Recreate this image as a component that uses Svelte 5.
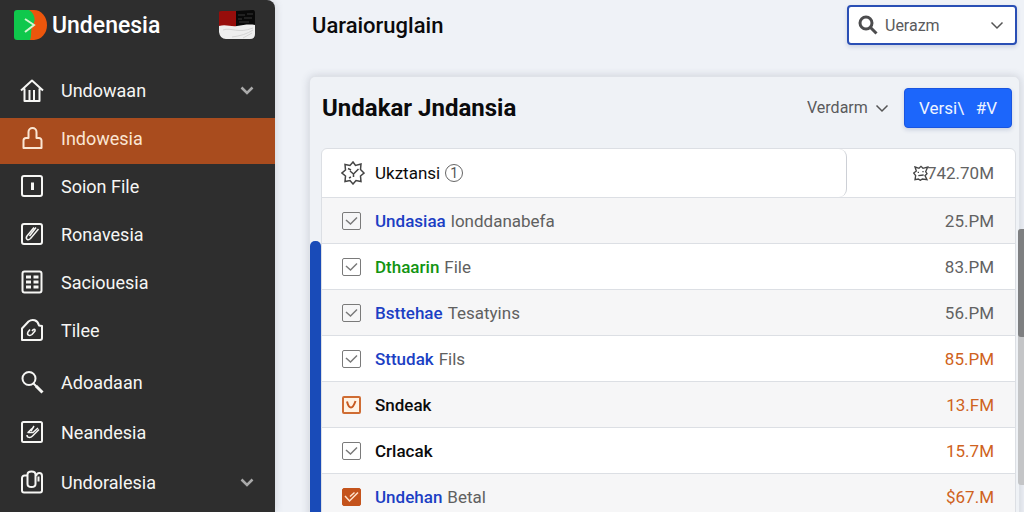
<script>
    const mainMenu = [
        { label: "Undowaan", icon: "home", expandable: true },
        { label: "Indowesia", icon: "stamp", active: true },
        { label: "Soion File", icon: "info" },
        { label: "Ronavesia", icon: "clip" },
        { label: "Saciouesia", icon: "table" },
        { label: "Tilee", icon: "tag" },
    ];

    const extraMenu = [
        { label: "Adoadaan", icon: "search" },
        { label: "Neandesia", icon: "edit" },
        { label: "Undoralesia", icon: "cards", expandable: true },
    ];

    let rows = $state([
        { name: "Undasiaa", tone: "blue", note: "londdanabefa", amount: "25.PM", box: "plain", checked: true },
        { name: "Dthaarin", tone: "green", note: "File", amount: "83.PM", box: "plain", checked: true },
        { name: "Bsttehae", tone: "blue", note: "Tesatyins", amount: "56.PM", box: "plain", checked: true },
        { name: "Sttudak", tone: "blue", note: "Fils", amount: "85.PM", warm: true, box: "plain", checked: true },
        { name: "Sndeak", tone: "dark", note: "", amount: "13.FM", warm: true, box: "outlined", checked: true },
        { name: "Crlacak", tone: "dark", note: "", amount: "15.7M", warm: true, box: "plain", checked: true },
        { name: "Undehan", tone: "blue", note: "Betal", amount: "$67.M", warm: true, box: "filled", checked: true },
    ]);

    let region = $state("Uerazm");
    let period = $state("Verdarm");
</script>

{#snippet chevron()}
    <svg class="chevron" viewBox="0 0 16 16" aria-hidden="true">
        <path d="M2.5 5.5 8 11l5.5-5.5" />
    </svg>
{/snippet}

{#snippet menuIcon(name)}
    <svg class="menu-icon" viewBox="0 0 24 24" aria-hidden="true">
        {#if name === "home"}
            <path d="M1 12.5 12 2.5l11 10M4.5 10.5V23h15V10.5M9.5 23V12M14 23V12" />
        {:else if name === "stamp"}
            <path d="M8.5 12V6a4 4 0 0 1 8 0v6h2.5a2.5 2.5 0 0 1 2.500 2.500V22h-18v-7.500A2.500 2.500 0 0 1 6 12z" />
        {:else if name === "info"}
            <rect x="2" y="2" width="20" height="20" rx="2" />
            <path class="thick" d="M12.500 8.500v7.500" />
        {:else if name === "clip"}
            <rect x="2" y="2" width="20" height="20" rx="2" />
            <path class="thin" d="M14 5.500 7 14c-2 3 1 5 3.500 2.500L18.500 7M16 5.500l-6.500 8.500" />
        {:else if name === "table"}
            <rect x="2.500" y="1.500" width="19" height="21" rx="2" />
            <path class="thick" d="M6 7h5M13.500 7h5M6 12h5M13.500 12h5M6 17h5M13.500 17h5" />
        {:else if name === "tag"}
            <path d="M2 22V10.500L8.500 3.500c4-3 9-1.500 10.500 4l3 .5v12a2 2 0 0 1-2 2z" />
            <path class="thin" d="m10 11.500-2 2.500c-1.500 3 1.500 4.500 4 2.500l3-3.500c.5-2.500-1.500-2-3 0" />
        {:else if name === "search"}
            <circle cx="9" cy="8.500" r="6.500" />
            <path d="m13.500 13.500 3 3" />
            <path class="thick" d="m16 16 6.500 6.500" />
        {:else if name === "edit"}
            <rect x="2" y="2" width="20" height="20" rx="1.500" />
            <path class="thin" d="m12 8.500-4 4h5l5-4.500M7 15c0 3 3.500 3 5.500 1l6.500-6.500M14 6l-3 5" />
        {:else if name === "cards"}
            <path d="M8 5.500H4.500A2.500 2.500 0 0 0 2 8v12.500a2 2 0 0 0 2 2h16a2 2 0 0 0 2-2V6c0-4-5-4-6 0" />
            <path d="M7.500 4.500c0-4 8-4 8 0V14c0 4-8 4-8 0zM18.500 6.500v5" />
        {/if}
    </svg>
{/snippet}

{#snippet menuItem(item)}
    <li>
        <a href="#{item.icon}" class="menu-item" class:active={item.active}>
            {@render menuIcon(item.icon)}
            <span class="menu-label">{item.label}</span>
            {#if item.expandable}
                {@render chevron()}
            {/if}
        </a>
    </li>
{/snippet}

<div class="page">
    <aside class="sidebar">
        <div class="brand">
            <svg class="logo" viewBox="0 0 34 30" aria-hidden="true">
                <path d="M14 0h6a13 15 0 0 1 0 30h-6z" fill="#ec560c" />
                <path d="M3 0h12c6 4 7 10 4 15s-1 11-3 15H3a3 3 0 0 1-3-3V3a3 3 0 0 1 3-3z" fill="#0fc84c" />
                <path d="m11 9 9 6-9 7" fill="none" stroke="#d5f5cf" stroke-width="2" />
            </svg>
            <span class="brand-name">Undenesia</span>
            <svg class="flag" viewBox="0 0 38 30" aria-hidden="true">
                <path d="M1 2Q1 1 4 1h14v16H1z" fill="#970d0b" />
                <path d="M18 1l17-1q2 0 2 3v12l-19 2z" fill="#090909" />
                <path d="M20 5h7M29 4h6M20 9h4M26 8h8M21 12h10" stroke="#393939" stroke-width="1" />
                <path d="M1 16c7-2 12 1 18 0s12-2 18-1v9q0 5-5 5H8q-6 0-7-7z" fill="#eee" />
                <path d="M5 20c8-3 15 4 30-2M14 27c8-1 15-3 21-7M25 28l9-5" fill="none" stroke="#d4d4d4" stroke-width="1" />
            </svg>
        </div>
        <nav>
            <ul class="menu">
                {#each mainMenu as item}
                    {@render menuItem(item)}
                {/each}
            </ul>
            <ul class="menu menu-extra">
                {#each extraMenu as item}
                    {@render menuItem(item)}
                {/each}
            </ul>
        </nav>
    </aside>

    <main class="content">
        <header class="topbar">
            <h1>Uaraioruglain</h1>
            <div class="picker picker-search">
                <svg class="search-icon" viewBox="0 0 20 20" aria-hidden="true">
                    <circle cx="8" cy="8" r="6" />
                    <path d="m12.500 12.500 6 6" />
                </svg>
                <select bind:value={region} aria-label="Uerazm">
                    <option>Uerazm</option>
                </select>
                {@render chevron()}
            </div>
        </header>

        <section class="card">
            <div class="card-head">
                <h2>Undakar Jndansia</h2>
                <div class="picker picker-plain">
                    <select bind:value={period} aria-label="Verdarm">
                        <option>Verdarm</option>
                    </select>
                    {@render chevron()}
                </div>
                <button type="button" class="btn-primary"><span>Versi\</span><span>#V</span></button>
            </div>

            <div class="card-body">
                <div class="rail"></div>
                <table>
                    <thead>
                        <tr>
                            <th class="head-name" scope="col">
                                <div class="head-box">
                                    <svg class="gear" viewBox="0 0 24 24" aria-hidden="true">
                                        <path d="m12 1 2.500 3.500L20 3l-.5 5.500L23 12l-3.500 3 .5 5.500-5-1L12 23l-3-3.500-5 1 .5-5.500L1 12l3.500-3L4 3.500l5 1z" />
                                        <path d="m7 7.500 3 1.500M9 10l3.500 3 5-5M12.500 13v3M8 17l2-1" />
                                    </svg>
                                    <span>Ukztansi</span>
                                    <span class="count">1</span>
                                </div>
                            </th>
                            <th class="amount" scope="col">
                                <div class="total">
                                    <svg class="gear gear-small" viewBox="0 0 24 24" aria-hidden="true">
                                        <path d="m3 3 6 2 3-3 3 3 7-2-3 7 2 3-3 3 3 6-7-1-3 2-3-2-5 1 1-6-3-4 4-3z" />
                                        <path d="M8 10v2M15 9v2M8 16l8-1" />
                                    </svg>
                                    <span>742.70M</span>
                                </div>
                            </th>
                        </tr>
                    </thead>
                    <tbody>
                        {#each rows as row, i}
                            <tr>
                                <td>
                                    <label class="row-label" for="row-{i}">
                                        <span class="check {row.box}">
                                            <input type="checkbox" id="row-{i}" bind:checked={row.checked} />
                                            {#if row.checked}
                                                <svg viewBox="0 0 18 18" aria-hidden="true">
                                                    {#if row.box === "outlined"}
                                                        <path d="M5 5.500c1 4 2 6 4 6s3-2 4.500-6.500" />
                                                    {:else if row.box === "filled"}
                                                        <path d="m3 8 4.500 5L16 4.500M8 8.500l4.500-4" />
                                                    {:else}
                                                        <path d="m4 8 4.500 4 6.500-6.500" />
                                                    {/if}
                                                </svg>
                                            {/if}
                                        </span>
                                        <span class="name {row.tone}">{row.name}</span>
                                        {#if row.note}
                                            <span class="note">{row.note}</span>
                                        {/if}
                                    </label>
                                </td>
                                <td class="amount" class:warm={row.warm}>{row.amount}</td>
                            </tr>
                        {/each}
                    </tbody>
                </table>
            </div>
        </section>
    </main>

    <div class="scroll-track"><div class="scroll-thumb"></div></div>
</div>

<style>
    :global(body) {
        background: #eff2f7;
        font-family: Roboto, "Liberation Sans", sans-serif;
        color: #0b0b0c;
    }

    .page {
        position: relative;
        display: flex;
        height: 100vh;
        overflow: hidden;
    }

    svg {
        display: block;
        flex: none;
    }

    .sidebar {
        flex: none;
        width: 275px;
        background: #2e2e2e;
        border-top-right-radius: 8px;
        box-shadow: 0 0 8px rgba(60, 70, 90, 0.2);
    }

    .brand {
        display: flex;
        align-items: center;
        height: 50px;
        padding: 0 19px 0 14px;
        color: #fff;
    }

    .logo {
        width: 34px;
        height: 30px;
        margin-right: 4px;
    }

    .brand-name {
        flex: 1;
        font-size: 23px;
        font-weight: 500;
    }

    .flag {
        width: 38px;
        height: 30px;
    }

    .menu {
        display: flex;
        flex-direction: column;
        gap: 2px;
        margin: 0;
        padding: 20px 0 0;
        list-style: none;
    }

    .menu-extra {
        gap: 4px;
        padding-top: 6px;
    }

    .menu-item {
        display: flex;
        align-items: center;
        box-sizing: border-box;
        height: 46px;
        padding: 0 20px 6px;
        color: #f6f6f4;
        font-size: 18px;
        text-decoration: none;
    }

    .menu-item.active {
        background: #a94c1e;
        color: #fbe6d3;
    }

    .menu-icon {
        width: 24px;
        height: 24px;
        margin-right: 17px;
        fill: none;
        stroke: currentColor;
        stroke-width: 2;
        stroke-linejoin: round;
    }

    .menu-icon .thick {
        stroke-width: 3;
    }

    .menu-icon .thin {
        stroke-width: 1.5;
    }

    .menu-label {
        flex: 1;
    }

    .chevron {
        width: 16px;
        height: 16px;
        fill: none;
        stroke: #555;
        stroke-width: 1.5;
    }

    .menu-item .chevron {
        stroke: #aaa;
        stroke-width: 2.5;
    }

    .content {
        flex: 1;
        display: flex;
        flex-direction: column;
        min-width: 0;
        padding: 0 4px 0 34px;
    }

    .topbar {
        flex: none;
        display: flex;
        align-items: center;
        justify-content: space-between;
        height: 50px;
        margin-bottom: 26px;
        padding: 0 3px;
    }

    h1 {
        margin: 0;
        font-size: 22px;
        font-weight: 500;
    }

    .picker {
        display: grid;
        align-items: center;
    }

    .picker select {
        grid-area: 1 / 1;
        appearance: none;
        margin: 0;
        border: 0;
        background: transparent;
        color: #5a5a5c;
        font: inherit;
        font-size: 16px;
    }

    .picker .chevron,
    .search-icon {
        grid-area: 1 / 1;
        justify-self: end;
        pointer-events: none;
    }

    .picker-search {
        box-sizing: border-box;
        width: 170px;
        height: 40px;
        border: 2px solid #2a4fb5;
        border-radius: 4px;
        background: #fff;
        box-shadow: 0 2px 4px rgba(60, 80, 140, 0.2);
    }

    .picker-search select {
        height: 36px;
        padding: 0 36px;
    }

    .picker-search .chevron {
        margin-right: 10px;
    }

    .picker .search-icon {
        width: 20px;
        height: 20px;
        justify-self: start;
        margin-left: 9px;
        fill: none;
        stroke: #4c4c4e;
        stroke-width: 3;
    }

    .picker-plain select {
        height: 36px;
        padding: 0 22px 0 0;
    }

    .card {
        flex: 1;
        display: flex;
        flex-direction: column;
        border: 1px solid #dfe2e8;
        border-bottom: 0;
        border-radius: 6px 6px 0 0;
        background: #eff2f6;
        box-shadow: 0 0 8px rgba(60, 70, 90, 0.2);
    }

    .card-head {
        flex: none;
        display: flex;
        align-items: center;
        height: 61px;
        padding: 0 7px 0 12px;
    }

    h2 {
        flex: 1;
        margin: 0;
        font-size: 24px;
        font-weight: 700;
    }

    .btn-primary {
        display: flex;
        align-items: center;
        justify-content: space-between;
        width: 108px;
        height: 40px;
        margin-left: 14px;
        padding: 0 14px;
        border: 1px solid #1a55e0;
        border-radius: 4px;
        background: #1c66fb;
        box-shadow: 0 2px 4px rgba(60, 80, 140, 0.2);
        color: #eef4ff;
        font: inherit;
        font-size: 17px;
    }

    .card-body {
        flex: 1;
        display: flex;
        align-items: stretch;
        padding: 10px 3px 0 0;
    }

    .rail {
        flex: none;
        width: 11px;
        margin-top: 93px;
        border-top-left-radius: 5px;
        border-top-right-radius: 5px;
        background: #194bb8;
    }

    table {
        flex: 1;
        align-self: flex-start;
        border-collapse: separate;
        border-spacing: 0;
        border: 1px solid #dcdfe4;
        border-radius: 6px 6px 0 0;
        background: #fff;
        font-size: 17px;
    }

    th,
    td {
        box-sizing: border-box;
        padding: 0;
        text-align: left;
        font-weight: 400;
    }

    td {
        height: 46px;
        border-top: 1px solid #dcdfe4;
    }

    tbody tr:nth-child(odd) {
        background: #f6f6f7;
    }

    .head-box {
        display: flex;
        align-items: center;
        box-sizing: border-box;
        height: 48px;
        padding-left: 19px;
        border-right: 1px solid #cdd0d6;
        border-radius: 0 8px 8px 0;
    }

    .gear {
        width: 24px;
        height: 24px;
        margin-right: 10px;
        fill: none;
        stroke: #454545;
        stroke-width: 1.5;
    }

    .gear-small {
        width: 16px;
        height: 16px;
        margin-right: -2px;
        stroke-width: 2;
    }

    .count {
        box-sizing: border-box;
        width: 18px;
        height: 18px;
        margin-left: 5px;
        border: 1px solid #666;
        border-radius: 50%;
        color: #555;
        font-size: 14px;
        line-height: 16px;
        text-align: center;
    }

    .total {
        display: flex;
        align-items: center;
        justify-content: flex-end;
    }

    .amount {
        width: 168px;
        padding-right: 21px;
        color: #626262;
        text-align: right;
    }

    .warm {
        color: #cf6220;
    }

    .row-label {
        display: flex;
        align-items: center;
        padding-left: 20px;
    }

    .check {
        display: grid;
        width: 19px;
        height: 18px;
        margin-right: 14px;
        color: #7a7a7a;
    }

    .check input {
        grid-area: 1 / 1;
        appearance: none;
        box-sizing: border-box;
        width: 19px;
        height: 18px;
        margin: 0;
        border: 1px solid #7a7a7a;
        border-radius: 2px;
    }

    .check svg {
        grid-area: 1 / 1;
        width: 18px;
        height: 18px;
        fill: none;
        stroke: currentColor;
        stroke-width: 1.5;
        pointer-events: none;
    }

    .check.outlined {
        color: #c75a20;
    }

    .check.outlined input {
        border: 2px solid #cf6c33;
        background: #fff3e4;
    }

    .check.outlined svg {
        stroke-width: 2;
    }

    .check.filled {
        color: #ffe3cc;
    }

    .check.filled input {
        border-color: #c4531c;
        background: #c4531c;
    }

    .name {
        font-weight: 500;
    }

    .blue {
        color: #1c3fc4;
    }

    .green {
        color: #129412;
    }

    .dark {
        color: #0b0b0c;
    }

    .note {
        margin-left: 5px;
        color: #606060;
    }

    .scroll-track {
        position: absolute;
        top: 229px;
        right: 0;
        width: 6px;
        height: 256px;
        border-radius: 3px 0 0 3px;
        background: #c4c5c7;
    }

    .scroll-thumb {
        height: 108px;
        border-radius: 3px 0 0 3px;
        background: #7e7f81;
    }
</style>
